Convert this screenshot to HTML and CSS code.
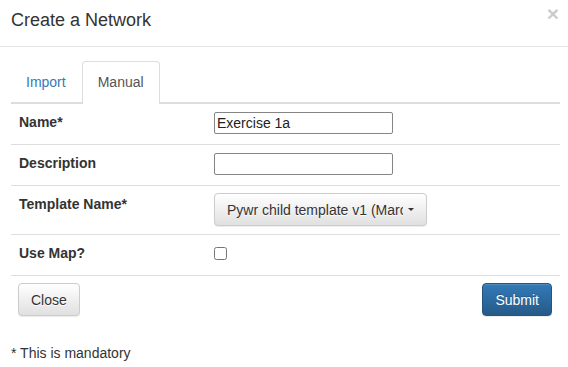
FILE: index.html
```html
<!DOCTYPE html>
<html lang="en">
<head>
    <meta charset="UTF-8">
    <meta name="viewport" content="width=device-width, initial-scale=1.0">
    <title>Create a Network</title>
    <link rel="stylesheet" href="styles.css">
</head>
<body>
    <div class="modal">
        <div class="modal-header">
            <h4 class="modal-title">Create a Network</h4>
            <button class="close" type="button">&times;</button>
        </div>

        <div class="modal-body">
            <ul class="nav-tabs">
                <li><a href="#import">Import</a></li>
                <li class="active"><a href="#manual">Manual</a></li>
            </ul>

            <div class="form-table">
                <div class="form-row">
                    <label for="netName">Name*</label>
                    <div><input type="text" id="netName" class="text-input" value="Exercise 1a"></div>
                </div>
                <div class="form-row">
                    <label for="netDesc">Description</label>
                    <div><input type="text" id="netDesc" class="text-input"></div>
                </div>
                <div class="form-row">
                    <label>Template Name*</label>
                    <div>
                        <button class="btn btn-default dropdown" type="button">
                            <span class="filter-option">Pywr child template v1 (March 2020)</span>
                            <span class="caret"></span>
                        </button>
                    </div>
                </div>
                <div class="form-row">
                    <label for="useMap">Use Map?</label>
                    <div><input type="checkbox" id="useMap" class="check"></div>
                </div>
            </div>

            <div class="form-footer">
                <button class="btn btn-default" type="button">Close</button>
                <button class="btn btn-primary" type="button">Submit</button>
            </div>

            <p class="note">* This is mandatory</p>
        </div>
    </div>
</body>
</html>
```

FILE: styles.css
```css
:root {
    --text: #333;
    --border: #ddd;
    --link: #337ab7;
}

* {
    margin: 0;
    padding: 0;
    box-sizing: border-box;
}

body {
    background-color: #fff;
    color: var(--text);
    font-family: "Liberation Sans", Arial, sans-serif;
    font-size: 14px;
    line-height: 20px;
}

.modal-header {
    display: flex;
    justify-content: space-between;
    align-items: flex-start;
    padding: 7px 9px 13px 11px;
    border-bottom: 1px solid #e5e5e5;
}

.modal-title {
    font-size: 18px;
    font-weight: normal;
    line-height: 26px;
}

.close {
    background: none;
    border: none;
    margin-top: -4px;
    font-family: "Liberation Sans", Arial, sans-serif;
    font-size: 21px;
    font-weight: bold;
    line-height: 21px;
    color: #000;
    opacity: 0.2;
    cursor: pointer;
}

.modal-body {
    padding: 14px 8px 0 11px;
}

.nav-tabs {
    display: flex;
    list-style: none;
    border-bottom: 2px solid var(--border);
}

.nav-tabs li {
    margin-bottom: -2px;
}

.nav-tabs a {
    display: block;
    padding: 10px 15px 11px 14px;
    border: 1px solid transparent;
    border-bottom: none;
    border-radius: 4px 4px 0 0;
    color: var(--link);
    text-decoration: none;
}

.nav-tabs .active a {
    color: #555;
    background-color: #fff;
    border-color: var(--border);
    padding: 10px 15px 12px;
}

.form-row {
    display: grid;
    grid-template-columns: 195px 1fr;
    min-height: 41px;
    border-bottom: 1px solid var(--border);
}

.form-row > * {
    padding: 8px;
}

.form-row label {
    font-weight: bold;
}

.text-input {
    display: block;
    width: 179px;
    height: 22px;
    padding: 1px 2px;
    border: 1px solid #858585;
    border-radius: 2px;
    font-family: "Liberation Sans", Arial, sans-serif;
    font-size: 14px;
    color: #222;
}

.check {
    display: block;
    width: 13px;
    height: 13px;
    margin: 4px 0 0;
}

.btn {
    display: inline-flex;
    align-items: center;
    height: 33px;
    padding: 0 12px;
    border: 1px solid transparent;
    border-radius: 4px;
    font-family: "Liberation Sans", Arial, sans-serif;
    font-size: 14px;
    cursor: pointer;
}

.btn-default {
    color: var(--text);
    background-image: linear-gradient(to bottom, #fff 0, #e0e0e0 100%);
    border-color: #ccc;
    text-shadow: 0 1px 0 #fff;
    box-shadow: inset 0 1px 0 rgba(255, 255, 255, 0.15), 0 1px 1px rgba(0, 0, 0, 0.075);
}

.btn-primary {
    color: #fff;
    background-image: linear-gradient(to bottom, #337ab7 0, #265a88 100%);
    border-color: #245580;
    text-shadow: 0 -1px 0 rgba(0, 0, 0, 0.2);
    box-shadow: inset 0 1px 0 rgba(255, 255, 255, 0.15), 0 1px 1px rgba(0, 0, 0, 0.075);
}

.dropdown {
    width: 213px;
    margin-top: -1px;
}

.filter-option {
    flex: 1;
    overflow: hidden;
    white-space: nowrap;
    text-align: left;
}

.caret {
    width: 0;
    height: 0;
    margin-left: 5px;
    border-top: 3px solid #333;
    border-left: 3px solid transparent;
    border-right: 3px solid transparent;
}

.form-footer {
    display: flex;
    justify-content: space-between;
    padding: 7px 8px 0 7px;
}

.note {
    margin-top: 27px;
}
```
